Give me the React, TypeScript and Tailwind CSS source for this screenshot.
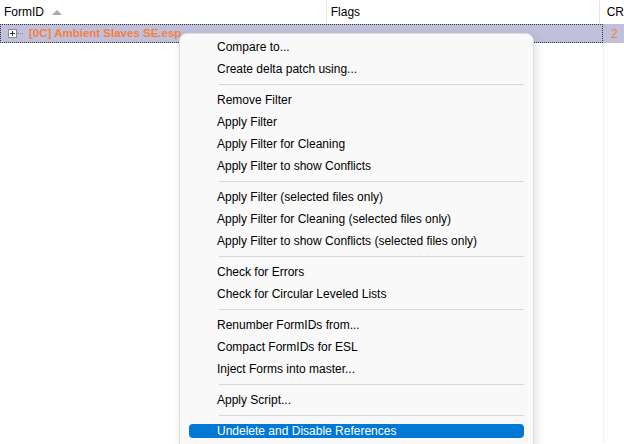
import React from "react";

type MenuEntry = string | null;

const menuItems: MenuEntry[] = [
  "Compare to...",
  "Create delta patch using...",
  null,
  "Remove Filter",
  "Apply Filter",
  "Apply Filter for Cleaning",
  "Apply Filter to show Conflicts",
  null,
  "Apply Filter (selected files only)",
  "Apply Filter for Cleaning (selected files only)",
  "Apply Filter to show Conflicts (selected files only)",
  null,
  "Check for Errors",
  "Check for Circular Leveled Lists",
  null,
  "Renumber FormIDs from...",
  "Compact FormIDs for ESL",
  "Inject Forms into master...",
  null,
  "Apply Script...",
  null,
];

const ContextMenu = () => {
  return (
    <div className="absolute left-[179px] top-[33px] w-[355px] h-[430px] rounded-lg border border-[#dedede] bg-[#f9f9f9] shadow-[2px_3px_8px_rgba(0,0,0,0.12)] pt-[2px]">
      {menuItems.map((item, i) =>
        item === null ? (
          <div key={i} className="h-[9px] flex items-center pl-[39px] pr-[9px]">
            <div className="h-px w-full bg-[#d6d6d6]" />
          </div>
        ) : (
          <div key={i} className="h-[22px] flex items-center pl-[37px] text-black">
            {item}
          </div>
        ),
      )}
      <div className="h-[22px] flex items-center px-[9px]">
        <div className="h-[14px] w-full rounded-[4px] bg-[#0078d4] text-white flex items-center pl-[28px]">
          Undelete and Disable References
        </div>
      </div>
    </div>
  );
};

export default function App() {
  return (
    <div
      className="relative w-[624px] h-[444px] overflow-hidden bg-white text-[12px] text-black"
      style={{ fontFamily: '"Segoe UI", "Liberation Sans", Arial, sans-serif' }}
    >
      {/* header */}
      <div className="flex h-[24px] items-center">
        <div className="w-[328px] h-full flex items-center pl-[4px] gap-[8px] border-r border-[#e5e5e5]">
          <span>FormID</span>
          <svg width="10" height="6" viewBox="0 0 10 6">
            <path d="M0 6 L5 1 L10 6 Z" fill="#a8a8a8" />
          </svg>
        </div>
        <div className="w-[274px] h-full flex items-center pl-[4px] border-r border-[#e5e5e5]">Flags</div>
        <div className="flex-1 h-full flex items-center pl-[7px]">CR</div>
      </div>

      {/* selected row */}
      <div className="flex h-[19px]">
        <div className="w-[603px] h-full flex items-center bg-[#c0c0da] border border-dotted border-[#333] pl-[7px]">
          <div className="w-[9px] h-[9px] border border-[#8a8a8a] bg-white flex items-center justify-center">
            <svg width="7" height="7" viewBox="0 0 7 7">
              <path d="M1 3.5 H6 M3.5 1 V6" stroke="#333" strokeWidth="1" />
            </svg>
          </div>
          <div className="w-[6px] border-t border-dotted border-[#888] mr-[6px]" />
          <span className="font-bold text-[11.5px] text-[#f5803e]">[0C] Ambient Slaves SE.esp</span>
        </div>
        <div className="flex-1 h-full bg-[#c0c0da] flex items-center pl-[8px] text-[#f5803e]">2</div>
      </div>

      {/* rest of grid */}
      <div className="flex h-[400px]">
        <div className="w-[603px] h-full" />
        <div className="h-full border-l border-dotted border-[#e8e8e8]" />
      </div>

      <ContextMenu />
    </div>
  );
}
